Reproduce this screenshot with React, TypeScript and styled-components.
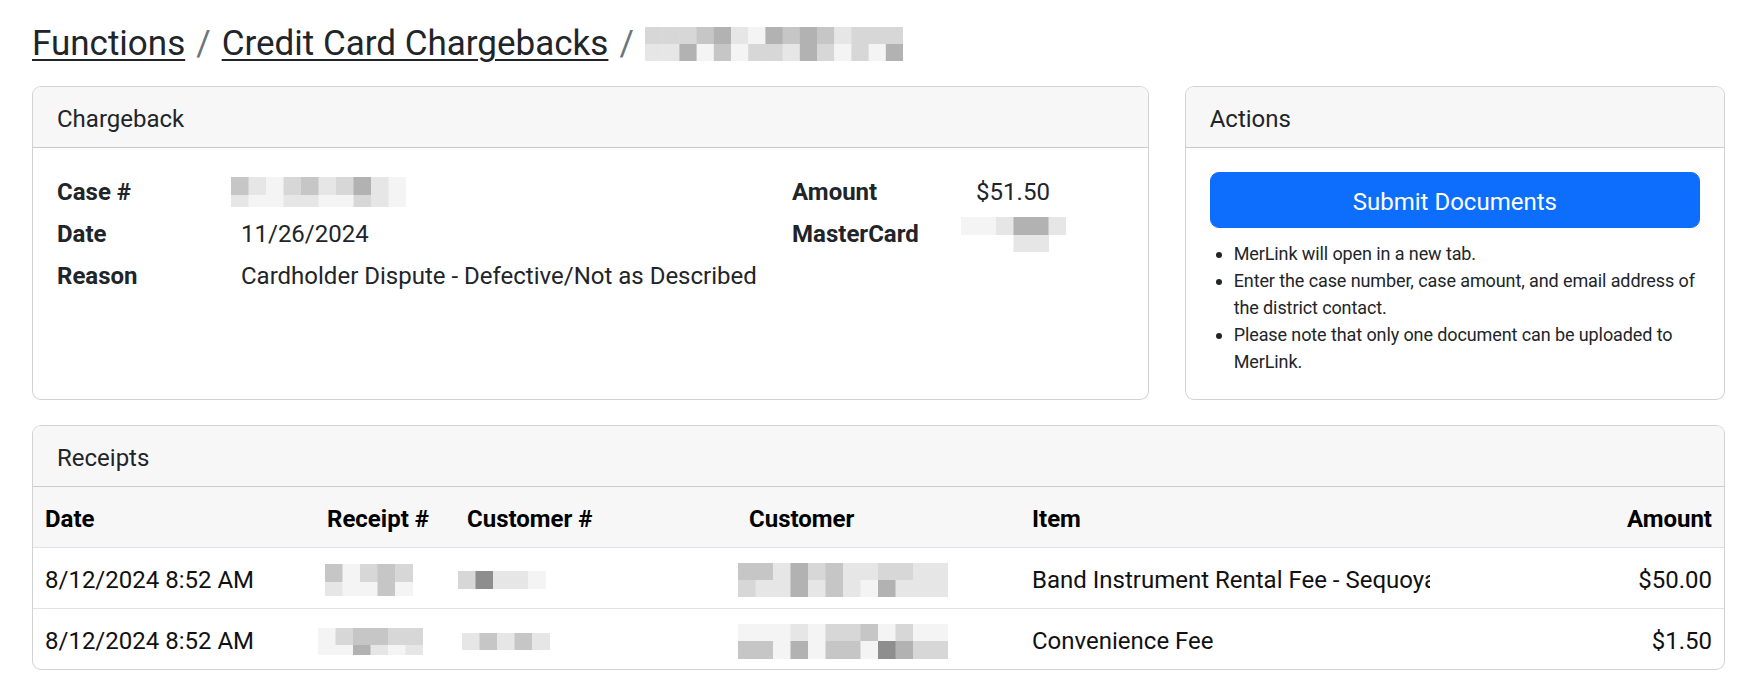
import styled, { createGlobalStyle } from "styled-components";

const GlobalStyle = createGlobalStyle`
    * {
        box-sizing: border-box;
    }
    body {
        margin: 0;
        background-color: #fff;
        color: #212529;
        font-family: Roboto, "Liberation Sans", sans-serif;
        font-size: 24px;
        line-height: 1.5;
    }
`;

const PageStyled = styled.div`
    padding: 22px 22px 24px 32px;
`;

const BreadcrumbStyled = styled.h3`
    display: flex;
    align-items: center;
    margin: 0 0 21px;
    font-size: 35px;
    font-weight: 400;
    line-height: 43px;

    & > a {
        color: #212529;
        text-decoration: underline;
        text-decoration-thickness: 2px;
        text-underline-offset: 4px;
    }

    & > .sep {
        margin: 0 11px;
        color: #6c757d;
    }
`;

const TopRowStyled = styled.div`
    display: grid;
    grid-template-columns: calc((100% + 36px) * 2 / 3 - 36px) 1fr;
    gap: 36px;
    margin-bottom: 25px;
`;

const CardStyled = styled.div`
    display: flex;
    flex-direction: column;
    overflow: hidden;
    border: 1px solid rgba(0, 0, 0, 0.175);
    border-radius: 9px;
    background-color: #fff;
`;

const CardHeaderStyled = styled.div`
    padding: 14px 24px 10px;
    background-color: #f7f7f7;
    border-bottom: 1px solid rgba(0, 0, 0, 0.175);
    font-size: 24px;
    line-height: 36px;
`;

const CardBodyStyled = styled.div<{ $flush?: boolean }>`
    flex: 1;
    padding: ${({ $flush }) => ($flush ? "0" : "24px")};
`;

const DetailColsStyled = styled.div`
    display: grid;
    grid-template-columns: calc((100% + 36px) * 2 / 3 - 36px) 1fr;
    column-gap: 36px;
    align-items: start;
    padding-top: 2px;
`;

const DetailListStyled = styled.dl`
    display: grid;
    grid-template-columns: 184px 1fr;
    row-gap: 6px;
    margin: 0;
    line-height: 36px;

    & > dt {
        font-weight: 700;
    }

    & > dd {
        display: flex;
        align-items: center;
        margin: 0;
        min-height: 36px;
        white-space: nowrap;
    }
`;

const ButtonStyled = styled.button`
    display: block;
    width: 100%;
    padding: 11px 18px 7px;
    border: 1px solid #0d6efd;
    border-radius: 9px;
    background-color: #0d6efd;
    color: #fff;
    font-family: inherit;
    font-size: 24px;
    line-height: 36px;
    cursor: pointer;
`;

const NotesStyled = styled.ul`
    margin: 12px 0 0;
    padding-left: 24px;
    font-size: 18px;
    line-height: 27px;
    letter-spacing: -0.1px;
`;

const TableStyled = styled.table`
    width: 100%;
    border-collapse: collapse;
    table-layout: fixed;
    line-height: 36px;
`;

const ThStyled = styled.th<{ $right?: boolean }>`
    padding: 14px 12px 10px;
    background-color: #f7f7f7;
    border-bottom: 1px solid #dee2e6;
    color: #000;
    font-weight: 700;
    text-align: ${({ $right }) => ($right ? "right" : "left")};
`;

const TrStyled = styled.tr`
    &:last-child > td {
        border-bottom: none;
    }
`;

const TdStyled = styled.td<{ $right?: boolean }>`
    padding: 14px 12px 10px;
    border-bottom: 1px solid #dee2e6;
    color: #111;
    vertical-align: middle;
    white-space: nowrap;
    text-align: ${({ $right }) => ($right ? "right" : "left")};
`;

const ClipStyled = styled.span`
    display: inline-block;
    max-width: 398px;
    overflow: hidden;
    vertical-align: bottom;
    white-space: nowrap;
`;

const MosaicStyled = styled.svg<{ $shift?: number }>`
    display: block;
    flex-shrink: 0;
    margin-left: ${({ $shift }) => $shift ?? 0}px;
`;

// pixelated blur placeholder: one string per row, one char per cell
const SHADES: Record<string, string> = {
    "1": "#f4f4f4",
    "2": "#e6e6e6",
    "3": "#d7d7d7",
    "4": "#c6c6c6",
    "5": "#b2b2b2",
    "6": "#8e8e8e",
};

type MosaicProps = { rows: string[]; heights: number[]; cell?: number; shift?: number };

const Mosaic = ({ rows, heights, cell = 17.5, shift }: MosaicProps) => {
    const width = Math.max(...rows.map((r) => r.length)) * cell;
    const height = heights.reduce((a, b) => a + b, 0);
    let y = 0;
    return (
        <MosaicStyled width={width} height={height} $shift={shift} aria-hidden="true">
            {rows.map((row, ri) => {
                const top = y;
                y += heights[ri];
                return row.split("").map((c, ci) =>
                    SHADES[c] ? (
                        <rect key={`${ri}-${ci}`} x={ci * cell} y={top} width={cell + 0.5} height={heights[ri]} fill={SHADES[c]} />
                    ) : null
                );
            })}
        </MosaicStyled>
    );
};

const RECEIPTS = [
    {
        date: "8/12/2024 8:52 AM",
        receipt: { rows: ["41343.", "21141."], heights: [18, 14], shift: -2 },
        customerNo: { rows: ["36221"], heights: [18], shift: -9 },
        customer: { rows: ["442534223322", "322524215222"], heights: [17, 17], shift: -11 },
        item: "Band Instrument Rental Fee - Sequoyah Middle School",
        amount: "$50.00",
    },
    {
        date: "8/12/2024 8:52 AM",
        receipt: { rows: ["134433", "115212"], heights: [17, 10], shift: -9 },
        customerNo: { rows: ["24242"], heights: [17], shift: -5 },
        customer: { rows: ["111213341311", "441514416533"], heights: [17, 18], shift: -11 },
        item: "Convenience Fee",
        amount: "$1.50",
    },
];

const App = () => {
    return (
        <>
            <GlobalStyle />
            <PageStyled>
                <BreadcrumbStyled>
                    <a href="#">Functions</a>
                    <span className="sep">/</span>
                    <a href="#">Credit Card Chargebacks</a>
                    <span className="sep">/</span>
                    <Mosaic
                        rows={["333452154542333", "225141332531315"]}
                        heights={[17, 17]}
                        cell={17.2}
                    />
                </BreadcrumbStyled>

                <TopRowStyled>
                    <CardStyled>
                        <CardHeaderStyled>Chargeback</CardHeaderStyled>
                        <CardBodyStyled>
                            <DetailColsStyled>
                                <DetailListStyled>
                                    <dt>Case #</dt>
                                    <dd>
                                        <Mosaic rows={["4213423521", "2112211321"]} heights={[18, 12]} shift={-10} />
                                    </dd>
                                    <dt>Date</dt>
                                    <dd>11/26/2024</dd>
                                    <dt>Reason</dt>
                                    <dd>Cardholder Dispute - Defective/Not as Described</dd>
                                </DetailListStyled>
                                <DetailListStyled>
                                    <dt>Amount</dt>
                                    <dd>$51.50</dd>
                                    <dt>MasterCard</dt>
                                    <dd>
                                        <Mosaic rows={["112552", "...22."]} heights={[18, 17]} shift={-15} />
                                    </dd>
                                </DetailListStyled>
                            </DetailColsStyled>
                        </CardBodyStyled>
                    </CardStyled>

                    <CardStyled>
                        <CardHeaderStyled>Actions</CardHeaderStyled>
                        <CardBodyStyled>
                            <ButtonStyled type="button">Submit Documents</ButtonStyled>
                            <NotesStyled>
                                <li>MerLink will open in a new tab.</li>
                                <li>Enter the case number, case amount, and email address of the district contact.</li>
                                <li>Please note that only one document can be uploaded to MerLink.</li>
                            </NotesStyled>
                        </CardBodyStyled>
                    </CardStyled>
                </TopRowStyled>

                <CardStyled>
                    <CardHeaderStyled>Receipts</CardHeaderStyled>
                    <CardBodyStyled $flush>
                        <TableStyled>
                            <colgroup>
                                <col width={282} />
                                <col width={140} />
                                <col width={282} />
                                <col width={283} />
                                <col width={500} />
                                <col />
                            </colgroup>
                            <thead>
                                <tr>
                                    <ThStyled>Date</ThStyled>
                                    <ThStyled>Receipt #</ThStyled>
                                    <ThStyled>Customer #</ThStyled>
                                    <ThStyled>Customer</ThStyled>
                                    <ThStyled>Item</ThStyled>
                                    <ThStyled $right>Amount</ThStyled>
                                </tr>
                            </thead>
                            <tbody>
                                {RECEIPTS.map((r, i) => (
                                    <TrStyled key={i}>
                                        <TdStyled>{r.date}</TdStyled>
                                        <TdStyled>
                                            <Mosaic {...r.receipt} />
                                        </TdStyled>
                                        <TdStyled>
                                            <Mosaic {...r.customerNo} />
                                        </TdStyled>
                                        <TdStyled>
                                            <Mosaic {...r.customer} />
                                        </TdStyled>
                                        <TdStyled>
                                            <ClipStyled>{r.item}</ClipStyled>
                                        </TdStyled>
                                        <TdStyled $right>{r.amount}</TdStyled>
                                    </TrStyled>
                                ))}
                            </tbody>
                        </TableStyled>
                    </CardBodyStyled>
                </CardStyled>
            </PageStyled>
        </>
    );
};

export default App;
